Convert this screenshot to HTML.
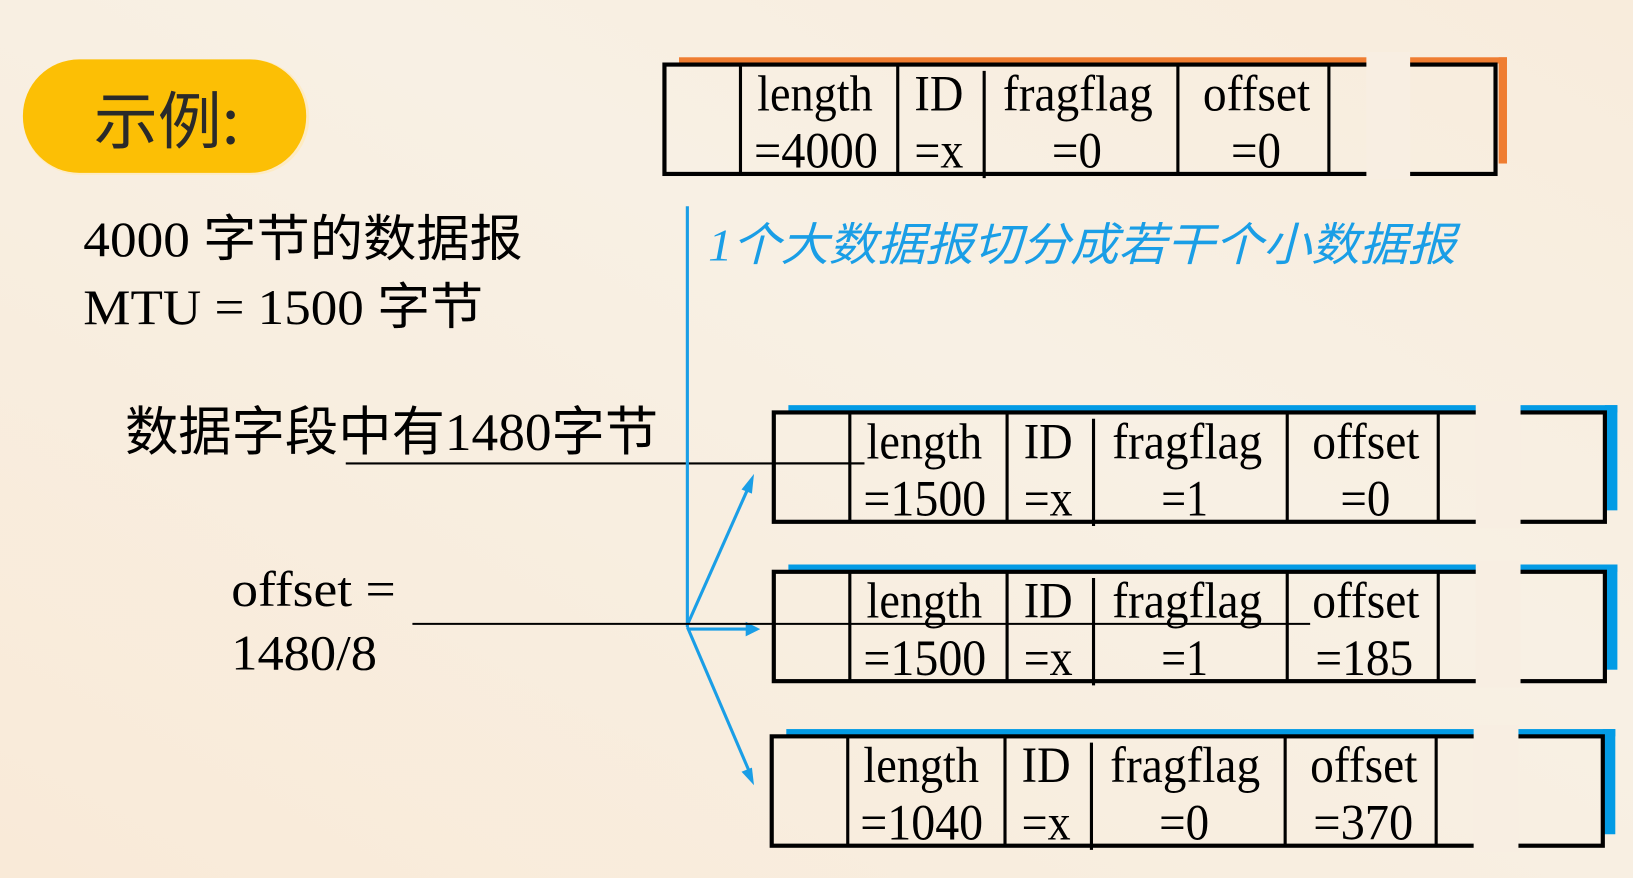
<!DOCTYPE html>
<html><head><meta charset="utf-8"><style>
html,body{margin:0;padding:0;width:1633px;height:878px;overflow:hidden;}
svg{display:block}
</style></head><body>
<svg width="1633" height="878" viewBox="0 0 1568 843" preserveAspectRatio="none" xmlns="http://www.w3.org/2000/svg">
<defs>
<linearGradient id="bg" x1="0" y1="1" x2="1" y2="0">
<stop offset="0" stop-color="#f9ead8"/><stop offset="0.6" stop-color="#f8f0e4"/><stop offset="1" stop-color="#f8ecdc"/>
</linearGradient>
<g id="box">
<rect x="0" y="0" width="798" height="105" fill="none" stroke="#000" stroke-width="4"/>
<line x1="73" y1="0" x2="73" y2="105" stroke="#000" stroke-width="3"/>
<line x1="224" y1="0" x2="224" y2="105" stroke="#000" stroke-width="3"/>
<line x1="307" y1="6" x2="307" y2="109" stroke="#000" stroke-width="3"/>
<line x1="493" y1="0" x2="493" y2="105" stroke="#000" stroke-width="3"/>
<line x1="638" y1="0" x2="638" y2="105" stroke="#000" stroke-width="3"/>
</g>
</defs>
<rect width="1568" height="843" fill="url(#bg)"/>
<rect x="22" y="57" width="275" height="111" rx="55" fill="#fdebc4"/>
<rect x="22" y="57" width="272" height="109" rx="54" fill="#fcbf05"/>
<text x="90" y="138" font-family="Noto Sans CJK SC, sans-serif" font-size="60" fill="#2a2a2a" textLength="140" lengthAdjust="spacingAndGlyphs">示例:</text>
<g font-family="Liberation Serif, Noto Sans CJK SC, serif" fill="#000">
<text x="80" y="246" font-size="48" textLength="422" lengthAdjust="spacingAndGlyphs">4000 字节的数据报</text>
<text x="80" y="311" font-size="48" textLength="384" lengthAdjust="spacingAndGlyphs">MTU = 1500 字节</text>
<text x="120" y="432" font-size="51" textLength="512" lengthAdjust="spacingAndGlyphs">数据字段中有1480字节</text>
<text x="222" y="582" font-size="48" textLength="158" lengthAdjust="spacingAndGlyphs">offset =</text>
<text x="222" y="643" font-size="48" textLength="140" lengthAdjust="spacingAndGlyphs">1480/8</text>
</g>
<text x="680" y="250" font-family="Liberation Serif, Noto Sans CJK SC, serif" font-style="italic" font-size="44" fill="#1a9ee6" textLength="718" lengthAdjust="spacingAndGlyphs">1个大数据报切分成若干个小数据报</text>
<line x1="332" y1="445" x2="830" y2="445" stroke="#000" stroke-width="2"/>
<g stroke="#1a9ee6" stroke-width="3" fill="#1a9ee6">
<line x1="660" y1="198" x2="660" y2="602"/>
<line x1="660" y1="600" x2="720" y2="465"/>
<polygon points="724,455 712,470 722,474" stroke="none"/>
<line x1="660" y1="604" x2="718" y2="604"/>
<polygon points="730,604 716,597 716,611" stroke="none"/>
<line x1="660" y1="602" x2="720" y2="742"/>
<polygon points="724,754 712,741 722,737" stroke="none"/>
</g>
<rect x="652" y="55" width="795" height="6" fill="#ef7d31"/>
<rect x="1439" y="55" width="8" height="102" fill="#ef7d31"/>
<use href="#box" x="638" y="62"/>
<rect x="1312" y="50" width="42" height="122" fill="#f8eee2"/>
<rect x="757" y="389" width="796" height="7" fill="#039be5"/>
<rect x="1541" y="389" width="12" height="101" fill="#039be5"/>
<use href="#box" x="743" y="396"/>
<rect x="1417" y="385" width="43" height="122" fill="#f8eee2"/>
<rect x="757" y="542" width="796" height="7" fill="#039be5"/>
<rect x="1541" y="542" width="12" height="101" fill="#039be5"/>
<use href="#box" x="743" y="549"/>
<rect x="1417" y="538" width="43" height="122" fill="#f8eee2"/>
<rect x="755" y="700" width="796" height="7" fill="#039be5"/>
<rect x="1539" y="700" width="12" height="101" fill="#039be5"/>
<use href="#box" x="741" y="707"/>
<rect x="1415" y="696" width="43" height="122" fill="#f8eee2"/>
<line x1="396" y1="599" x2="1258" y2="599" stroke="#000" stroke-width="2"/>
<line x1="743" y1="445" x2="830" y2="445" stroke="#000" stroke-width="2"/>
<g font-family="Liberation Serif, serif" font-size="49" fill="#000" lengthAdjust="spacingAndGlyphs">
<g>
<text x="727" y="106" textLength="111" lengthAdjust="spacingAndGlyphs">length</text><text x="724" y="161" textLength="119" lengthAdjust="spacingAndGlyphs">=4000</text>
<text x="878" y="106" textLength="47" lengthAdjust="spacingAndGlyphs">ID</text><text x="878" y="161" textLength="47" lengthAdjust="spacingAndGlyphs">=x</text>
<text x="963" y="106" textLength="144" lengthAdjust="spacingAndGlyphs">fragflag</text><text x="1010" y="161" textLength="48" lengthAdjust="spacingAndGlyphs">=0</text>
<text x="1155" y="106" textLength="103" lengthAdjust="spacingAndGlyphs">offset</text><text x="1182" y="161" textLength="48" lengthAdjust="spacingAndGlyphs">=0</text>
</g>
<g>
<text x="832" y="440" textLength="111" lengthAdjust="spacingAndGlyphs">length</text><text x="829" y="495" textLength="118" lengthAdjust="spacingAndGlyphs">=1500</text>
<text x="983" y="440" textLength="47" lengthAdjust="spacingAndGlyphs">ID</text><text x="983" y="495" textLength="47" lengthAdjust="spacingAndGlyphs">=x</text>
<text x="1068" y="440" textLength="144" lengthAdjust="spacingAndGlyphs">fragflag</text><text x="1115" y="495" textLength="45" lengthAdjust="spacingAndGlyphs">=1</text>
<text x="1260" y="440" textLength="103" lengthAdjust="spacingAndGlyphs">offset</text><text x="1287" y="495" textLength="48" lengthAdjust="spacingAndGlyphs">=0</text>
</g>
<g>
<text x="832" y="593" textLength="111" lengthAdjust="spacingAndGlyphs">length</text><text x="829" y="648" textLength="118" lengthAdjust="spacingAndGlyphs">=1500</text>
<text x="983" y="593" textLength="47" lengthAdjust="spacingAndGlyphs">ID</text><text x="983" y="648" textLength="47" lengthAdjust="spacingAndGlyphs">=x</text>
<text x="1068" y="593" textLength="144" lengthAdjust="spacingAndGlyphs">fragflag</text><text x="1115" y="648" textLength="45" lengthAdjust="spacingAndGlyphs">=1</text>
<text x="1260" y="593" textLength="103" lengthAdjust="spacingAndGlyphs">offset</text><text x="1263" y="648" textLength="94" lengthAdjust="spacingAndGlyphs">=185</text>
</g>
<g>
<text x="829" y="751" textLength="111" lengthAdjust="spacingAndGlyphs">length</text><text x="826" y="806" textLength="118" lengthAdjust="spacingAndGlyphs">=1040</text>
<text x="981" y="751" textLength="47" lengthAdjust="spacingAndGlyphs">ID</text><text x="981" y="806" textLength="47" lengthAdjust="spacingAndGlyphs">=x</text>
<text x="1066" y="751" textLength="144" lengthAdjust="spacingAndGlyphs">fragflag</text><text x="1113" y="806" textLength="48" lengthAdjust="spacingAndGlyphs">=0</text>
<text x="1258" y="751" textLength="103" lengthAdjust="spacingAndGlyphs">offset</text><text x="1261" y="806" textLength="96" lengthAdjust="spacingAndGlyphs">=370</text>
</g>
</g>
</svg>
</body></html>
